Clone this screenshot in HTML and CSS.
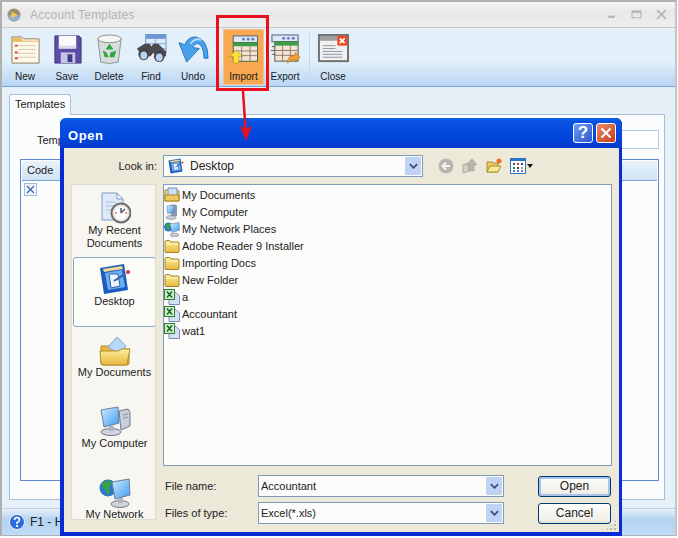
FILE: index.html
```html
<!DOCTYPE html>
<html lang="en">
<head>
    <meta charset="UTF-8">
    <meta name="viewport" content="width=device-width, initial-scale=1.0">
    <title>Account Templates</title>
    <link rel="stylesheet" href="styles.css">
</head>
<body>
    <svg class="defs" width="0" height="0">
        <defs>
            <linearGradient id="folderFill" x1="0" y1="0" x2="0" y2="1">
                <stop offset="0" stop-color="#fdeea0"/>
                <stop offset="1" stop-color="#e8b83c"/>
            </linearGradient>
            <linearGradient id="screenFill" x1="0" y1="0" x2="1" y2="1">
                <stop offset="0" stop-color="#cfeeff"/>
                <stop offset="1" stop-color="#3c9cf0"/>
            </linearGradient>
            <symbol id="folder" viewBox="0 0 16 16">
                <path d="M1 13.500V4q0-1.500 1.500-1.500h3L7 4h7q1 0 1 1v8.500q0 1-1 1H2q-1 0-1-1z" fill="url(#folderFill)" stroke="#a88420"/>
                <path d="M2 6h12" stroke="#fff6c8"/>
            </symbol>
            <symbol id="xls" viewBox="0 0 16 16">
                <path d="M5 3.500h7l3.500 3.500v8.500H5z" fill="#d4e0f4" stroke="#7c8cb8"/>
                <rect x="0.500" y="0.500" width="10" height="10" fill="#d4ecc8" stroke="#2c7c34"/>
                <path d="M3 2.500l5 6M8 2.500l-5 6" stroke="#146c24" stroke-width="1.500"/>
            </symbol>
            <symbol id="mycomp" viewBox="0 0 32 32">
                <path d="M20 6l9-2 2 3v14l-9 4z" fill="#c8cedc" stroke="#70788c"/>
                <path d="M24 10l5-1M24 13l5-1" stroke="#8c94a8"/>
                <path d="M2 5l17-3 1 16-15 4z" fill="url(#screenFill)" stroke="#6c7c9c"/>
                <ellipse cx="12" cy="27" rx="10" ry="3.500" fill="#d0d4dc" stroke="#70788c"/>
                <path d="M10 21h5v5h-5z" fill="#aeb4c4"/>
            </symbol>
            <symbol id="desktopicon" viewBox="0 0 32 32">
                <path d="M1 5L25 1l4 26-24 4z" fill="#1c5cc0"/>
                <path d="M4 6l19-3 1 3-19 3z" fill="#f0d88c"/>
                <path d="M6 10l17-3 3 17-17 3z" fill="#6cb0f0"/>
                <path d="M10 11h9l2 12-9 2z" fill="#eaf2fc" stroke="#2c64b4"/>
                <path d="M15 18l11-7" stroke="#3c5ca8" stroke-width="2"/>
                <circle cx="29" cy="9" r="2" fill="#d03c30"/>
            </symbol>
        </defs>
    </svg>

    <div class="app">
        <div class="titlebar">
            <svg class="app-logo" viewBox="0 0 14 14"><circle cx="7" cy="7" r="6.500" fill="#9a8c70"/><path d="M1 7a6 6 0 0 0 12 0z" fill="#8fb0d4"/><path d="M4.500 3.500l6 3.500-6 3.500z" fill="#f6cc50"/></svg>
            <span class="app-title">Account Templates</span>
            <span class="win-btns">
                <svg viewBox="0 0 10 10"><path d="M2 7h6" stroke="#b4b4b4" stroke-width="2"/></svg>
                <svg viewBox="0 0 10 10"><path d="M1 2h8v6H1z" fill="none" stroke="#b4b4b4"/><path d="M1 2.500h8" stroke="#b4b4b4" stroke-width="2"/></svg>
                <svg viewBox="0 0 10 10"><path d="M1 1l8 8M9 1l-8 8" stroke="#b8b8b8" stroke-width="1.800"/></svg>
            </span>
        </div>

        <div class="toolbar">
            <div class="tool">
                <svg class="tool-icon" viewBox="0 0 32 32"><path d="M2 3h10l2 2h16v25H2z" fill="#fdf8e8" stroke="#8c7c5c"/><path d="M2.500 4h9l2 3h16v1h-27z" fill="#f0b860"/><path d="M9 12h17M9 16h17M9 20h17M9 24h17" stroke="#b89c94" stroke-dasharray="1 1"/><path d="M5 11h3v2H5zM5 18h3v2H5zM5 24h3v2H5z" fill="#d8482c"/></svg>
                <span>New</span>
            </div>
            <div class="tool">
                <svg class="tool-icon" viewBox="0 0 32 32"><path d="M3 2h25l2 2v26H3z" fill="#5c4ca8" stroke="#3c3478"/><path d="M7 2h18v13H7z" fill="#fafafc"/><path d="M7 12h18v3H7z" fill="#d8d8f0"/><path d="M9 19h15v11H9z" fill="#c4c4e4"/><path d="M16 21h5v8h-5z" fill="#3c3c88"/></svg>
                <span>Save</span>
            </div>
            <div class="tool">
                <svg class="tool-icon" viewBox="0 0 32 32"><path d="M4 5l3 24q9 3 18 0l3-24z" fill="#d8dcdc" stroke="#8c9090"/><ellipse cx="16" cy="5" rx="12" ry="4" fill="#f4f4f4" stroke="#8c9090"/><path d="M16 10l4 6h-8zM23 17l-2 7h-5l1-5zM9 17l4 2 2 5h-4z" fill="#2ca83c"/></svg>
                <span>Delete</span>
            </div>
            <div class="tool">
                <svg class="tool-icon" viewBox="0 0 32 32"><rect x="10" y="0.500" width="21" height="19" fill="#dcecf8" stroke="#6c94d0"/><path d="M10.500 1h20v4h-20z" fill="#6c94d8"/><path d="M20 5v14M10 10h21M10 15h21" stroke="#8cacdc"/><path d="M1 15l8-5h5l2 3 2-3h5l8 8v5h-10l-3-4-3 4H6z" fill="#4c4c50"/><ellipse cx="8" cy="21" rx="5.500" ry="6" fill="#444"/><ellipse cx="24" cy="23" rx="5.500" ry="6" fill="#444"/><ellipse cx="8" cy="22" rx="3.500" ry="4" fill="#b8d4f4"/><ellipse cx="24" cy="24" rx="3.500" ry="4" fill="#b8d4f4"/></svg>
                <span>Find</span>
            </div>
            <div class="tool">
                <svg class="tool-icon" viewBox="0 0 32 28"><path d="M31 23Q31 3 18 1 10 1 7 9L1 7l8 20 13-14-7-1q2-5 6-4 5 1 6 15z" fill="#48a0e8" stroke="#2c74c4"/><path d="M13 8q4-6 11-4" stroke="#b8dcf8" stroke-width="2" fill="none"/></svg>
                <span>Undo</span>
            </div>
            <div class="tool tool-active">
                <svg class="tool-icon" viewBox="0 0 32 32"><rect x="5" y="1" width="26" height="7" fill="#dce8f8" stroke="#4c5c7c"/><circle cx="16" cy="4.500" r="1.500" fill="#5c7cc0"/><circle cx="21" cy="4.500" r="1.500" fill="#5c7cc0"/><circle cx="26" cy="4.500" r="1.500" fill="#5c7cc0"/><rect x="5" y="8" width="26" height="20" fill="#f4e4d4" stroke="#4c5c3c"/><path d="M5 8h26v4H5z" fill="#3c9c48"/><path d="M14 12v16M23 12v16M5 17h26M5 22h26" stroke="#8c7c6c"/><path d="M1 23l7-7 7 7h-4v7H5v-7z" fill="#fce038" stroke="#a08820" stroke-width="0.600"/></svg>
                <span>Import</span>
            </div>
            <div class="tool">
                <svg class="tool-icon" viewBox="0 0 32 32"><rect x="2" y="1" width="27" height="7" fill="#dce8f8" stroke="#4c5c7c"/><circle cx="14" cy="4.500" r="1.500" fill="#5c7cc0"/><circle cx="19" cy="4.500" r="1.500" fill="#5c7cc0"/><circle cx="24" cy="4.500" r="1.500" fill="#5c7cc0"/><rect x="5" y="8" width="24" height="20" fill="#f4e4d4" stroke="#4c5c3c"/><path d="M5 8h24v4H5z" fill="#3c9c48"/><path d="M13 12v16M21 12v16M5 17h24M5 22h24" stroke="#8c7c6c"/><path d="M2 13h3M1 17h4M2 21h3" stroke="#555"/><path d="M18 30q0-8 8-8v-3l5 5-5 5v-3q-4 0-8 4z" fill="#f4a030" stroke="#b06818" stroke-width="0.600"/></svg>
                <span>Export</span>
            </div>
            <div class="tool-sep"></div>
            <div class="tool">
                <svg class="tool-icon" viewBox="0 0 32 32"><rect x="1" y="1" width="30" height="27" fill="#f0f0f0" stroke="#707070" stroke-width="2"/><path d="M2 2h28v5H2z" fill="#a0a0a0"/><path d="M5 12h13M5 15h13M5 18h20M5 21h20M5 24h20" stroke="#8c98a8"/><rect x="20" y="2" width="10" height="10" fill="#f0481c"/><path d="M22.500 4.500l5 5M27.500 4.500l-5 5" stroke="#fff" stroke-width="1.800"/></svg>
                <span>Close</span>
            </div>
        </div>

        <div class="workspace">
            <div class="tab">Templates</div>
            <div class="panel">
                <div class="field-row">
                    <span class="field-label">Template</span>
                    <div class="field-input"></div>
                </div>
                <div class="grid">
                    <div class="grid-head">Code</div>
                    <div class="grid-row">
                        <svg class="grid-check" viewBox="0 0 13 13"><rect x="0.500" y="0.500" width="12" height="12" fill="#eef4fb" stroke="#a8bcd8"/><path d="M3 3l7 7M10 3l-7 7" stroke="#3c68a8" stroke-width="1.300"/></svg>
                    </div>
                </div>
            </div>
        </div>

        <div class="statusbar">
            <svg class="help-icon" viewBox="0 0 16 16"><circle cx="8" cy="8" r="7.500" fill="#2c6cd8" stroke="#e8f0fc"/><path d="M5.500 6q0-2.500 2.500-2.500T10.500 6Q10.500 7.500 8 8.500V10" fill="none" stroke="#fff" stroke-width="1.600"/><path d="M7 11h2v2H7z" fill="#fff"/></svg>
            <span>F1 - Help</span>
        </div>
    </div>

    <div class="dialog">
        <div class="dlg-title">
            <span class="dlg-name">Open</span>
            <span class="dlg-btn dlg-help">?</span>
            <span class="dlg-btn dlg-close">
                <svg viewBox="0 0 12 12"><path d="M1.500 1.500l9 9M10.500 1.500l-9 9" stroke="#fff" stroke-width="2"/></svg>
            </span>
        </div>
        <div class="dlg-body">
            <div class="lookin">
                <span class="lookin-label">Look in:</span>
                <div class="combo combo-look">
                    <svg class="ico16" viewBox="0 0 32 32"><use href="#desktopicon"/></svg>
                    <span class="combo-text">Desktop</span>
                    <span class="combo-arrow"><svg viewBox="0 0 10 6"><path d="M1 1l4 4 4-4" fill="none" stroke="#3c4c78" stroke-width="2"/></svg></span>
                </div>
                <div class="nav-icons">
                    <svg class="nav-back" viewBox="0 0 16 16"><circle cx="8" cy="8" r="7.500" fill="#b8b6ae"/><path d="M12 8H5M8 4.500L4.500 8 8 11.500" fill="none" stroke="#f4f4f0" stroke-width="2"/></svg>
                    <svg class="nav-up" viewBox="0 0 16 16"><path d="M1 15V7l6-2v8z" fill="#d4d2c8" stroke="#aaa89e"/><path d="M7 13V7L4.500 7 10 1l5 6h-3v6z" fill="#b8b6ae" stroke="#9c9a90" stroke-width="0.600"/></svg>
                    <svg class="nav-new" viewBox="0 0 16 16"><path d="M1 14V4h5l1 1h5v9z" fill="#e8c868" stroke="#a88c30"/><path d="M1 14l3-6h11l-3 6z" fill="#fce890" stroke="#a88c30"/><circle cx="13" cy="3" r="2.500" fill="#f07020"/></svg>
                    <svg class="nav-views" viewBox="0 0 16 16"><rect x="0.500" y="0.500" width="15" height="15" fill="#fff" stroke="#2c74c4"/><path d="M1 1h14v2H1z" fill="#2c74c4"/><path d="M3 5h2v2H3z" fill="#2c4ca8"/><path d="M7 5h2v2H7z" fill="#d83c2c"/><path d="M11 5h2v2h-2z" fill="#2c4ca8"/><path d="M3 9h2v2H3z" fill="#2ca83c"/><path d="M7 9h2v2H7z" fill="#2c4ca8"/><path d="M11 9h2v2h-2z" fill="#e8a020"/><path d="M3 12h2v2H3zM7 12h2v2H7zM11 12h2v2h-2z" fill="#5c7cc8"/></svg>
                    <span class="views-caret"></span>
                </div>
            </div>

            <div class="browser">
                <div class="places">
                    <div class="place">
                        <svg class="place-icon" viewBox="0 0 32 32"><path d="M3 1h15l6 6v21H3z" fill="#dfe9f8" stroke="#7c9ccc"/><path d="M18 1l6 6h-6z" fill="#f8fbff" stroke="#7c9ccc"/><path d="M7 10h10M7 14h8M7 18h8" stroke="#a8c0e4"/><circle cx="22" cy="21" r="9.500" fill="#e8e8e4" stroke="#6c6c6c" stroke-width="2"/><circle cx="22" cy="21" r="6.500" fill="#fdfdfd"/><path d="M22 21l4-4M22 21v-5" stroke="#4c5c7c" stroke-width="1.500"/><circle cx="17" cy="21" r="1" fill="#e07c40"/><circle cx="27" cy="21" r="1" fill="#e07c40"/></svg>
                        <span>My Recent<br>Documents</span>
                    </div>
                    <div class="place place-active">
                        <svg class="place-icon" viewBox="0 0 32 32"><use href="#desktopicon"/></svg>
                        <span>Desktop</span>
                    </div>
                    <div class="place">
                        <svg class="place-icon" viewBox="0 0 32 32"><path d="M2 12h10l3 3h15v14q0 2-2 2H4q-2 0-2-2z" fill="#e8b844" stroke="#b08c28"/><path d="M9 13L18 3l9 9-7 8z" fill="#b8d8f8" stroke="#7ca4d4"/><path d="M1 17h18l4-2h8l-3 15q0 1-2 1H4q-2 0-2-2z" fill="url(#folderFill)" stroke="#b08c28"/></svg>
                        <span>My Documents</span>
                    </div>
                    <div class="place">
                        <svg class="place-icon" viewBox="0 0 32 32"><use href="#mycomp"/></svg>
                        <span>My Computer</span>
                    </div>
                    <div class="place">
                        <svg class="place-icon" viewBox="0 0 32 32"><circle cx="9" cy="12" r="8.500" fill="#2c78d0"/><path d="M4 6l6-2 3 3-3 4 1 5-3 3-2-6-3-2z" fill="#3ca040"/><path d="M13 6l17-3 1 16-15 4z" fill="url(#screenFill)" stroke="#6c7c9c"/><ellipse cx="21" cy="28" rx="9" ry="3.500" fill="#d0d4dc" stroke="#70788c"/><path d="M19 22h5v5h-5z" fill="#aeb4c4"/></svg>
                        <span>My Network</span>
                    </div>
                </div>

                <div class="filelist">
                    <div class="file">
                        <svg class="ico16" viewBox="0 0 16 16"><path d="M1 14V3h5l1 1h8v10z" fill="url(#folderFill)" stroke="#a88420"/><path d="M4 1h9v8H4z" fill="#cfe0f6" stroke="#6c8cc0"/><path d="M1 8h14v6H1z" fill="#f0c860" stroke="#a88420"/></svg>
                        <span>My Documents</span>
                    </div>
                    <div class="file">
                        <svg class="ico16" viewBox="0 0 32 32"><path d="M12 2l12-1 2 3v20l-12 3z" fill="#8c96b4"/><path d="M6 4l13-2 1 14-13 3z" fill="url(#screenFill)" stroke="#5c6c94"/><ellipse cx="14" cy="27" rx="10" ry="4" fill="#c8ccd8" stroke="#70788c"/></svg>
                        <span>My Computer</span>
                    </div>
                    <div class="file">
                        <svg class="ico16" viewBox="0 0 32 32"><circle cx="9" cy="12" r="9" fill="#2c78d0"/><path d="M4 6l6-2 3 3-3 4 1 5-3 3-2-6-3-2z" fill="#3ca040"/><path d="M12 6l18-3 1 15-15 5z" fill="url(#screenFill)" stroke="#5c6c94"/><ellipse cx="21" cy="28" rx="9" ry="3.500" fill="#c8ccd8" stroke="#70788c"/></svg>
                        <span>My Network Places</span>
                    </div>
                    <div class="file"><svg class="ico16"><use href="#folder"/></svg><span>Adobe Reader 9 Installer</span></div>
                    <div class="file"><svg class="ico16"><use href="#folder"/></svg><span>Importing Docs</span></div>
                    <div class="file"><svg class="ico16"><use href="#folder"/></svg><span>New Folder</span></div>
                    <div class="file"><svg class="ico16"><use href="#xls"/></svg><span>a</span></div>
                    <div class="file"><svg class="ico16"><use href="#xls"/></svg><span>Accountant</span></div>
                    <div class="file"><svg class="ico16"><use href="#xls"/></svg><span>wat1</span></div>
                </div>
            </div>

            <div class="open-form">
                <div class="form-row">
                    <span class="form-label">File name:</span>
                    <div class="combo combo-form">
                        <span class="combo-text">Accountant</span>
                        <span class="combo-arrow"><svg viewBox="0 0 10 6"><path d="M1 1l4 4 4-4" fill="none" stroke="#3c4c78" stroke-width="2"/></svg></span>
                    </div>
                    <div class="xp-btn xp-default">Open</div>
                </div>
                <div class="form-row">
                    <span class="form-label">Files of type:</span>
                    <div class="combo combo-form">
                        <span class="combo-text">Excel(*.xls)</span>
                        <span class="combo-arrow"><svg viewBox="0 0 10 6"><path d="M1 1l4 4 4-4" fill="none" stroke="#3c4c78" stroke-width="2"/></svg></span>
                    </div>
                    <div class="xp-btn">Cancel</div>
                </div>
            </div>
            <span class="grip"></span>
        </div>
    </div>

    <div class="callout"></div>
    <svg class="arrow" viewBox="0 0 16 52">
        <path d="M5 0l2.500 38" stroke="#e8101c" stroke-width="2.500"/>
        <path d="M2 35l6 3 6-3-6 15z" fill="#e8101c"/>
    </svg>
</body>
</html>
```

FILE: styles.css
```css
* {
    margin: 0;
    padding: 0;
    box-sizing: border-box;
}

body {
    width: 678px;
    height: 538px;
    overflow: hidden;
    position: relative;
    background: #fff;
    font-family: 'Liberation Sans', sans-serif;
    font-size: 11px;
    color: #222;
}

.defs {
    position: absolute;
}

/* main window */
.app {
    height: 536px;
    width: 677px;
    display: flex;
    flex-direction: column;
    border: 1px solid #b0b0b0;
    border-width: 2px 1px 1px 2px;
    border-right: 2px solid #c4c4c4;
    background: #e6f0f8;
}

.titlebar {
    height: 26px;
    flex: none;
    display: flex;
    align-items: center;
    padding: 0 8px 0 5px;
    background: linear-gradient(#f6f6f6, #e8e8e8 40%, #eeeeee);
    border-bottom: 1px solid #c8c8c8;
}

.app-logo {
    width: 14px;
    height: 14px;
}

.app-title {
    margin-left: 9px;
    font-size: 12px;
    letter-spacing: 0.2px;
    color: #b4b4b4;
}

.win-btns {
    margin-left: auto;
    display: flex;
    gap: 14px;
}

.win-btns svg {
    width: 11px;
    height: 11px;
}

.toolbar {
    height: 59px;
    flex: none;
    display: flex;
    padding-left: 2px;
    background: linear-gradient(#e4f0f9, #e4f0f9 55%, #b8d6f4);
    border-bottom: 1px solid #7aa4d8;
}

.tool {
    width: 42px;
    padding-top: 6px;
    display: flex;
    flex-direction: column;
    align-items: center;
    font-size: 10px;
    color: #1a1a1a;
}

.tool span {
    margin-top: 5px;
    line-height: 14px;
}

.tool-icon {
    width: 31px;
    height: 31px;
}

.tool-active {
    width: 41px;
    margin: 1px 0 1px 9px;
    padding-top: 5px;
    background: #f7a850;
    border: 1px solid #f2c48c;
}

.tool-sep {
    width: 1px;
    margin: 5px 2px 6px 3px;
    background: #c4d8ee;
}

.workspace {
    flex: 1;
    padding: 7px 10px 8px 7px;
    display: flex;
    flex-direction: column;
}

.tab {
    align-self: flex-start;
    height: 21px;
    padding: 0 5px;
    line-height: 19px;
    background: #fbfcfe;
    border: 1px solid #a8c0dc;
    border-bottom: none;
    border-radius: 3px 3px 0 0;
    margin-bottom: -1px;
    position: relative;
}

.panel {
    flex: 1;
    background: #fbfcfe;
    border: 1px solid #a8bcd4;
    padding: 15px 5px 18px 10px;
    display: flex;
    flex-direction: column;
}

.field-row {
    display: flex;
    align-items: center;
    height: 19px;
    padding-left: 17px;
}

.field-label {
    width: 60px;
}

.field-input {
    flex: 1;
    height: 19px;
    background: #fff;
    border: 1px solid #b4c8e4;
}

.grid {
    flex: 1;
    margin-top: 10px;
    border: 1px solid #5c8cd0;
    padding: 1px;
}

.grid-head {
    height: 20px;
    padding-left: 5px;
    line-height: 19px;
    background: linear-gradient(#e8f2fa, #cfe2f4);
    border-bottom: 1px solid #7ca4d8;
}

.grid-row {
    padding: 2px 0 0 2px;
}

.grid-check {
    width: 13px;
    height: 13px;
    display: block;
}

.statusbar {
    height: 27px;
    flex: none;
    display: flex;
    align-items: center;
    gap: 5px;
    padding-left: 7px;
    background: linear-gradient(#e8f0f8, #b4d4f4 40%, #c0dcf6);
    border-top: 1px solid #bcd0e8;
    font-size: 12px;
}

.help-icon {
    width: 16px;
    height: 16px;
}

/* red marks drawn over the window */
.callout {
    position: absolute;
    left: 216px;
    top: 15px;
    width: 53px;
    height: 76px;
    border: 3px solid #e8101c;
}

.arrow {
    position: absolute;
    left: 238px;
    top: 91px;
    width: 16px;
    height: 52px;
}

/* open dialog */
.dialog {
    position: absolute;
    left: 60px;
    top: 118px;
    width: 562px;
    height: 418px;
    display: flex;
    flex-direction: column;
    background: #0a2ad4;
    border-radius: 6px 6px 0 0;
    padding: 0 3px 4px 4px;
}

.dlg-title {
    height: 30px;
    flex: none;
    display: flex;
    align-items: center;
    margin: 0 -3px 0 -4px;
    padding: 0 6px 0 8px;
    border-radius: 6px 6px 0 0;
    background: linear-gradient(#0a66e8, #0a50e0 12%, #0046dc 70%, #0838c8);
}

.dlg-name {
    padding-top: 4px;
    font-size: 13px;
    font-weight: 700;
    letter-spacing: 0.6px;
    color: #fff;
}

.dlg-btn {
    width: 20px;
    height: 20px;
    display: flex;
    align-items: center;
    justify-content: center;
    border: 1px solid #fff;
    border-radius: 3px;
    color: #fff;
}

.dlg-btn svg {
    width: 12px;
    height: 12px;
}

.dlg-help {
    margin-left: auto;
    margin-right: 3px;
    background: linear-gradient(135deg, #6f9cf2, #2a56d0);
    font-size: 17px;
    font-weight: 700;
}

.dlg-close {
    background: linear-gradient(135deg, #ea8c6c, #c83c18);
}

.dlg-body {
    flex: 1;
    background: #ece9d8;
    padding: 7px 6px 0 7px;
    display: flex;
    flex-direction: column;
    position: relative;
    min-height: 0;
}

.lookin {
    height: 22px;
    flex: none;
    display: flex;
    align-items: center;
}

.lookin-label {
    width: 92px;
    padding-right: 6px;
    text-align: right;
}

.combo {
    display: flex;
    align-items: center;
    height: 22px;
    background: #fcfcfb;
    border: 1px solid #7f9db9;
    padding: 1px;
}

.combo-look {
    width: 260px;
    padding-left: 4px;
}

.combo-look .combo-text {
    margin-left: 5px;
    font-size: 12px;
}

.combo-text {
    flex: 1;
    padding-left: 1px;
}

.combo-arrow {
    width: 16px;
    height: 18px;
    display: flex;
    align-items: center;
    justify-content: center;
    background: #c1d3f4;
    border-radius: 1px;
}

.combo-arrow svg {
    width: 9px;
    height: 6px;
}

.ico16 {
    width: 16px;
    height: 16px;
    flex: none;
}

.nav-icons {
    display: flex;
    align-items: center;
    margin-left: 15px;
    gap: 8px;
}

.nav-icons svg {
    width: 16px;
    height: 16px;
}

.views-caret {
    margin-left: -7px;
    border: 3px solid transparent;
    border-top: 4px solid #111;
    margin-top: 3px;
}

.browser {
    flex: 1;
    min-height: 0;
    display: flex;
    margin-top: 7px;
    gap: 7px;
}

.places {
    width: 85px;
    height: 336px;
    flex: none;
    overflow: hidden;
    background: #f7f6f1;
    border: 1px solid #dedccc;
    padding: 1px 0 0 1px;
    display: flex;
    flex-direction: column;
    gap: 1px;
}

.place {
    height: 70px;
    flex: none;
    width: 83px;
    padding-top: 5px;
    display: flex;
    flex-direction: column;
    align-items: center;
    text-align: center;
    line-height: 13px;
    border: 1px solid transparent;
    border-radius: 3px;
}

.place-active {
    background: #fbfbf8;
    border-color: #8ca6c4;
}

.place-icon {
    width: 32px;
    height: 32px;
    margin-bottom: 0;
    flex: none;
}

.filelist {
    width: 449px;
    height: 282px;
    flex: none;
    background: #fbfbfa;
    border: 1px solid #7f9db9;
    padding: 1px 0 0 0;
}

.file {
    height: 17px;
    display: flex;
    align-items: center;
    gap: 2px;
}

.open-form {
    position: absolute;
    left: 100px;
    top: 327px;
    right: 6px;
    display: flex;
    flex-direction: column;
    gap: 5px;
}

.form-row {
    display: flex;
    align-items: center;
}

.form-label {
    width: 94px;
    padding-left: 1px;
}

.combo-form {
    width: 246px;
    height: 22px;
    margin-right: 34px;
}

.xp-btn {
    width: 73px;
    height: 21px;
    line-height: 19px;
    text-align: center;
    font-size: 12px;
    background: linear-gradient(#fdfdfb, #f0efe8 85%, #dcd8cc);
    border: 1px solid #003c74;
    border-radius: 3px;
}

.xp-default {
    box-shadow: inset 0 0 0 2px #a8c4ec;
}

.grip {
    position: absolute;
    right: 2px;
    bottom: 1px;
    width: 12px;
    height: 12px;
    background: radial-gradient(circle, #bdb9a4 1px, transparent 1.2px) 0 0 / 4px 4px;
    clip-path: polygon(100% 0, 100% 100%, 0 100%);
}
```
